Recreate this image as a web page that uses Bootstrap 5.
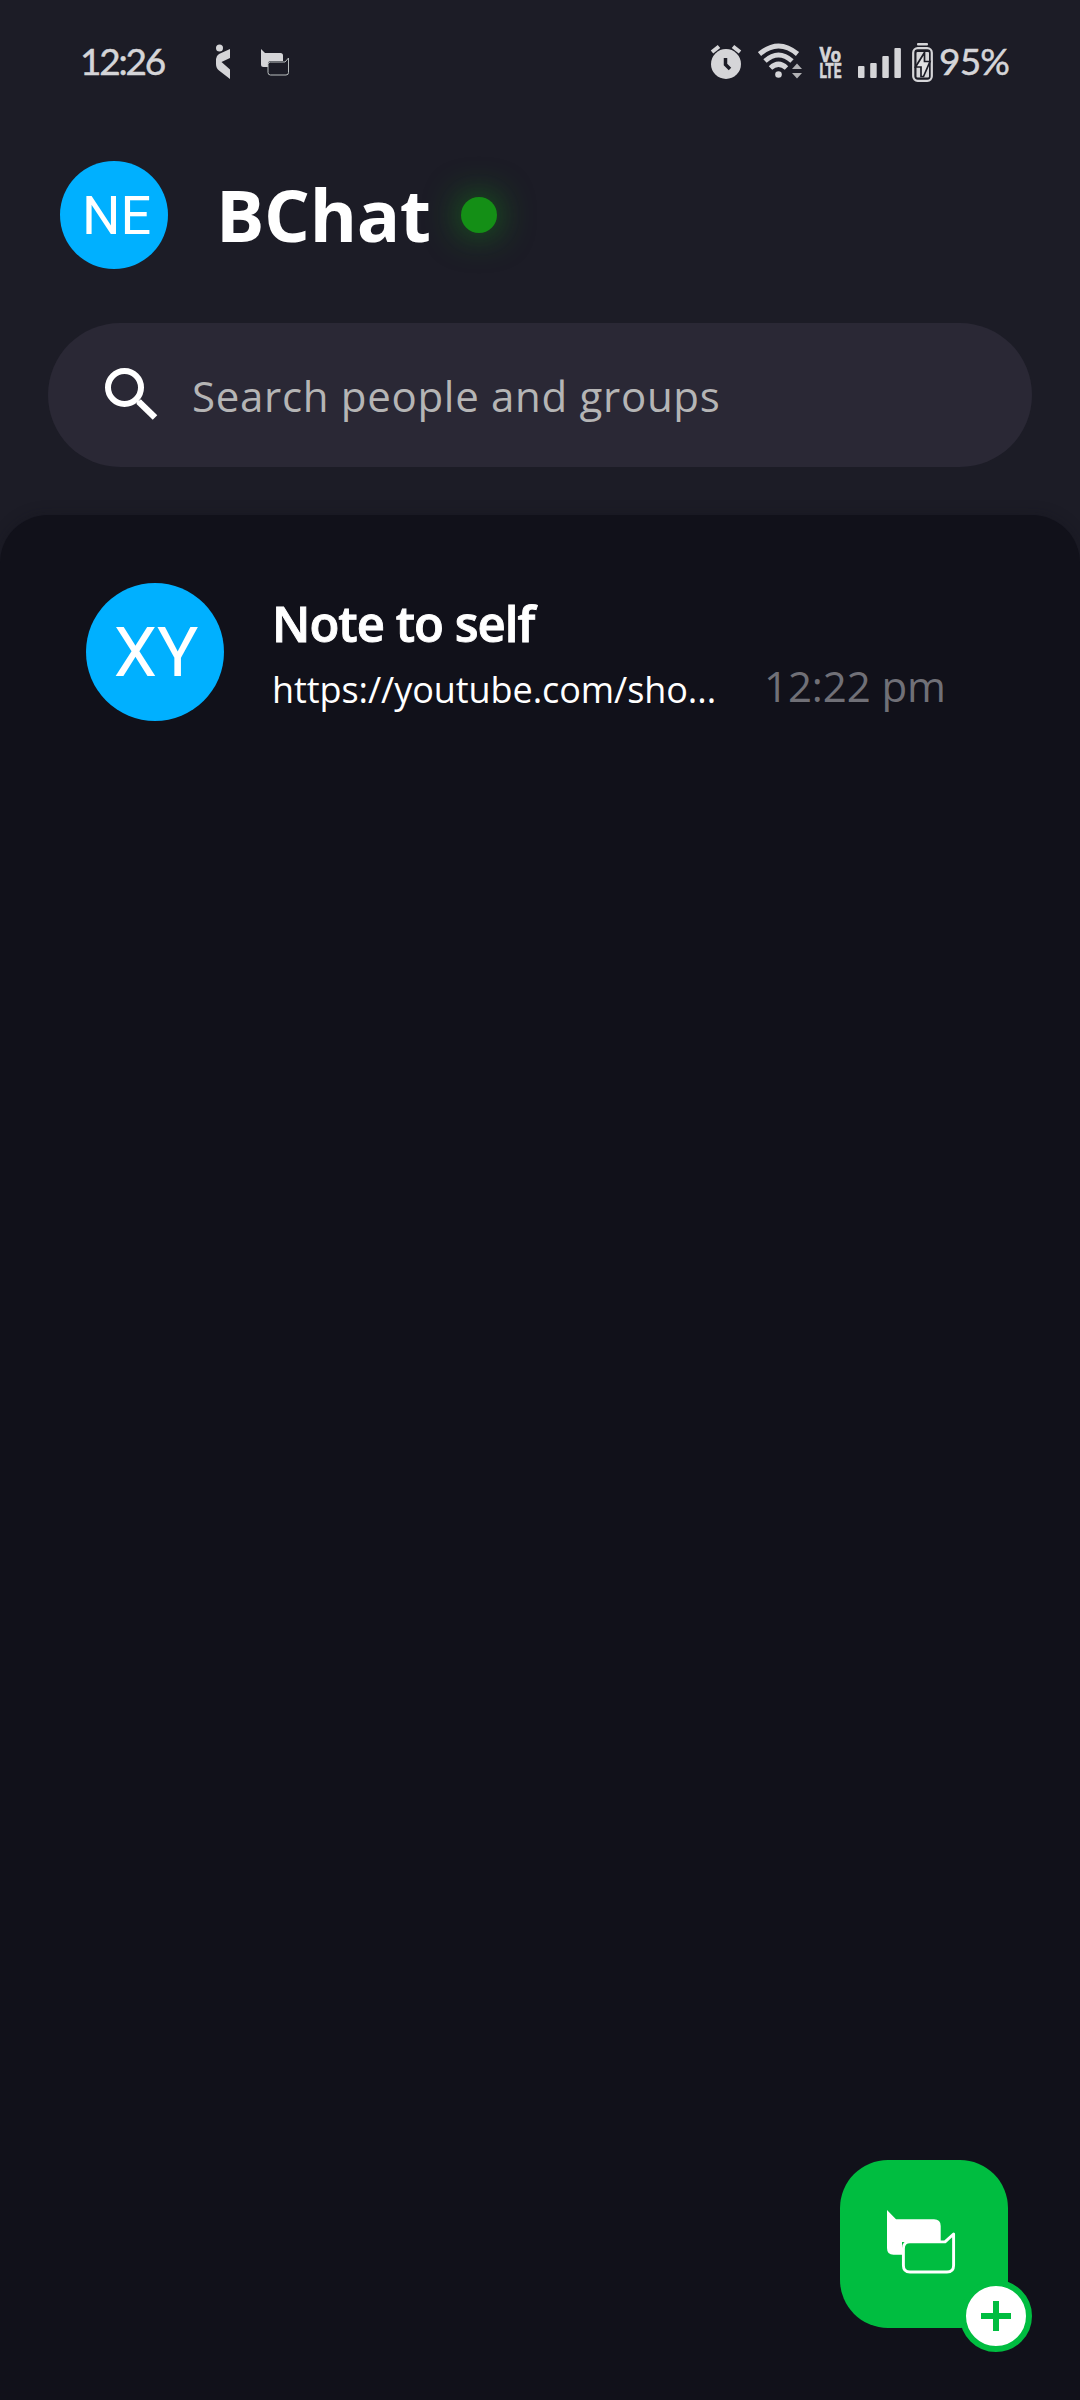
<!DOCTYPE html>
<html lang="en" data-bs-theme="dark">
<head>
<meta charset="utf-8">
<meta name="viewport" content="width=device-width, initial-scale=1">
<title>BChat</title>
<link rel="stylesheet" href="https://cdn.jsdelivr.net/npm/bootstrap@5.3.0/dist/css/bootstrap.min.css">
<style>
  body { background: #1c1c26; color: #fff; font-family: "Open Sans", "Noto Sans", sans-serif; }
  svg { display: block; flex: none; }
  .screen { width: 1080px; height: 2400px; }
  .statusbar { height: 125px; padding: 0 69px 0 80px; color: #d5d5d8; font-family: Lato, sans-serif; font-size: 37px; line-height: 122px; -webkit-text-stroke: .5px #d5d5d8; }
  .clock { width: 136px; height: 125px; letter-spacing: -2.2px; }
  .percent { width: 72px; height: 125px; margin-left: 6px; letter-spacing: -.8px; white-space: nowrap; }
  .topbar { height: 180px; padding: 0 60px; }
  .avatar { background: #00b0ff; font-family: Roboto, sans-serif; flex: none; }
  .avatar-me { width: 108px; height: 108px; font-size: 54px; padding-left: 5px; }
  .avatar-chat { width: 138px; height: 138px; font-size: 69px; padding: 2px 0 0 2px; }
  .brand { font-size: 72px; font-weight: 700; line-height: 98px; margin-left: 48px; padding-bottom: 3px; width: 245px; letter-spacing: -.3px; white-space: nowrap; }
  .online { width: 36px; height: 36px; background: #148f16; box-shadow: 0 0 36px 0 rgba(20,143,22,.8); }
  .search { height: 144px; margin: 18px 48px 48px; padding-left: 56px; background: #2a2835; color: #b5b5b5; font-size: 42px; letter-spacing: .7px; }
  .search span { margin-left: 34px; padding-top: 1px; }
  .chats { background: #11111a; border-radius: 48px 48px 0 0; padding: 68px 86px; box-shadow: 0 0 14px rgba(17,17,26,.35); }
  .chat-name { font-size: 49px; font-weight: 600; line-height: 66px; letter-spacing: -1px; -webkit-text-stroke: .9px #fff; }
  .chat-text { font-size: 36px; line-height: 50px; width: 446px; letter-spacing: -.07px; padding-top: 9px; }
  .chat-time { font-size: 42px; line-height: 50px; color: #707077; margin-left: 46px; padding-top: 5px; letter-spacing: -.1px; white-space: nowrap; }
  .chat-body { margin-left: 48px; padding-top: 7px; }
  .fab { right: 72px; bottom: 72px; width: 168px; height: 168px; border-radius: 48px; background: #00bd40; }
  .fab-plus { right: -24px; bottom: -24px; width: 72px; height: 72px; background: #fff; border: 6px solid #00bd40; }
</style>
</head>
<body>
<div class="screen d-flex flex-column position-relative overflow-hidden">
  <header class="statusbar d-flex align-items-center">
    <div class="clock">12:26</div>
    <svg width="14" height="36" viewBox="0 0 14 36" fill="#d5d5d8" style="margin-top:-2px"><circle cx="3.500" cy="4" r="3.500"/><path d="M14 5V14L5.500 18L14 25.500V35L3 26.500Q0 24 0 20V15Q0 12 3 10Z"/></svg>
    <svg width="28" height="27" viewBox="0 0 28 27" style="margin-left:31px"><path d="M0 0L4 4H19.500Q22 4 22 6.500V12H10Q7 12 7 15V18H2.500Q0 18 0 15.500Z" fill="#d5d5d8"/><path d="M9.500 13H24L27.500 9V23.500Q27.500 26 25 26H9.500Q7 26 7 23.500V15.500Q7 13 9.500 13Z" fill="#1c1c26" stroke="#b9bebe"/></svg>
    <div class="d-flex align-items-center ms-auto">
      <svg width="32" height="36" viewBox="0 0 32 36" style="margin-top:-1px"><circle cx="16" cy="20" r="15" fill="#d5d5d8"/><path d="M2 8L9 2.500M30 8L23 2.500" stroke="#d5d5d8" stroke-width="4"/><path d="M15.500 14V20.500L20 25" fill="none" stroke="#1c1c26" stroke-width="3.500"/></svg>
      <svg width="44" height="36" viewBox="0 0 44 36" style="margin-left:16px;margin-top:-3px"><g fill="none" stroke="#d5d5d8" stroke-width="5"><path d="M1.500 11Q20.500-5 39.500 11"/><path d="M7 18Q20.500 6 34 18"/><path d="M12.500 25Q20.500 17.500 28.500 25"/></g><circle cx="20.500" cy="31.500" r="3.300" fill="#d5d5d8"/><path d="M34 26L39 20.500L44 26ZM34 30L39 35.500L44 30Z" fill="#b2b2b5"/></svg>
      <svg width="23" height="46" viewBox="0 0 23 46" style="margin-left:17px" fill="#d5d5d8" stroke="#d5d5d8" stroke-width=".7" font-family="Roboto" font-weight="700" font-size="20.500"><text x=".5" y="21.500" textLength="21.500" lengthAdjust="spacingAndGlyphs">Vo</text><text x=".5" y="37.800" textLength="22" lengthAdjust="spacingAndGlyphs">LTE</text></svg>
      <svg width="43" height="30" viewBox="0 0 43 30" style="margin-left:16px" fill="#d5d5d8"><rect y="18" width="6.500" height="12" rx="1"/><rect x="12.200" y="15" width="6.500" height="15" rx="1"/><rect x="24.300" y="8" width="6.500" height="22" rx="1"/><rect x="36.400" width="6.500" height="30" rx="1"/></svg>
      <svg width="21" height="39" viewBox="0 0 21 39" style="margin-left:11px;margin-top:-1px"><rect x="5" width="11" height="2.600" rx="1" fill="#d5d5d8"/><rect x="1.200" y="5.200" width="18.600" height="32.600" rx="4.500" fill="none" stroke="#d5d5d8" stroke-width="2.200"/><rect x="4.500" y="9" width="12.500" height="25.500" rx="1" fill="#d5d5d8"/><path d="M12.500 9.500L3.500 24H9V33.500H11.500L18 18.500H12.500Z" fill="#e2e2e4" stroke="#1c1c26" stroke-width="1.700"/></svg>
      <div class="percent">95%</div>
    </div>
  </header>
  <nav class="topbar d-flex align-items-center">
    <div class="avatar avatar-me rounded-circle d-flex align-items-center justify-content-center">NE</div>
    <div class="brand">BChat</div>
    <div class="online rounded-circle"></div>
  </nav>
  <div class="search rounded-pill d-flex align-items-center">
    <svg width="54" height="54" viewBox="0 0 54 54" fill="none" stroke="#fff"><circle cx="20.500" cy="19.500" r="16.500" stroke-width="6"/><path d="M34.500 33.500L51 49.500" stroke-width="6.500"/><path d="M32 33V30.500L34 32.500H38L34.500 37L32 33Z" fill="#fff" stroke="none"/></svg>
    <span>Search people and groups</span>
  </div>
  <main class="chats flex-grow-1">
    <div class="d-flex">
      <div class="avatar avatar-chat rounded-circle d-flex align-items-center justify-content-center">XY</div>
      <div class="chat-body">
        <div class="chat-name">Note to self</div>
        <div class="d-flex">
          <div class="chat-text text-nowrap">https://youtube.com/sho...</div>
          <div class="chat-time">12:22 pm</div>
        </div>
      </div>
    </div>
  </main>
  <div class="fab position-absolute">
    <svg width="168" height="168" viewBox="0 0 168 168"><path d="M47 50L56 59.300H94Q100.700 59.300 100.700 66V82H62V94.800H53.500Q47 94.800 47 88Z" fill="#fff"/><path d="M70 81.900H105L113.600 74V105.500Q113.600 112 107 112H70Q63.400 112 63.400 105.500V88.500Q63.400 81.900 70 81.900Z" fill="#00bd40" stroke="#fff" stroke-width="2.900" stroke-linejoin="round"/></svg>
    <div class="fab-plus position-absolute rounded-circle d-flex align-items-center justify-content-center">
      <svg width="30" height="30" viewBox="0 0 30 30" stroke="#00bd40" stroke-width="6"><path d="M15 0V30M0 15H30"/></svg>
    </div>
  </div>
</div>
<script src="https://cdn.jsdelivr.net/npm/bootstrap@5.3.0/dist/js/bootstrap.bundle.min.js"></script>
</body>
</html>
